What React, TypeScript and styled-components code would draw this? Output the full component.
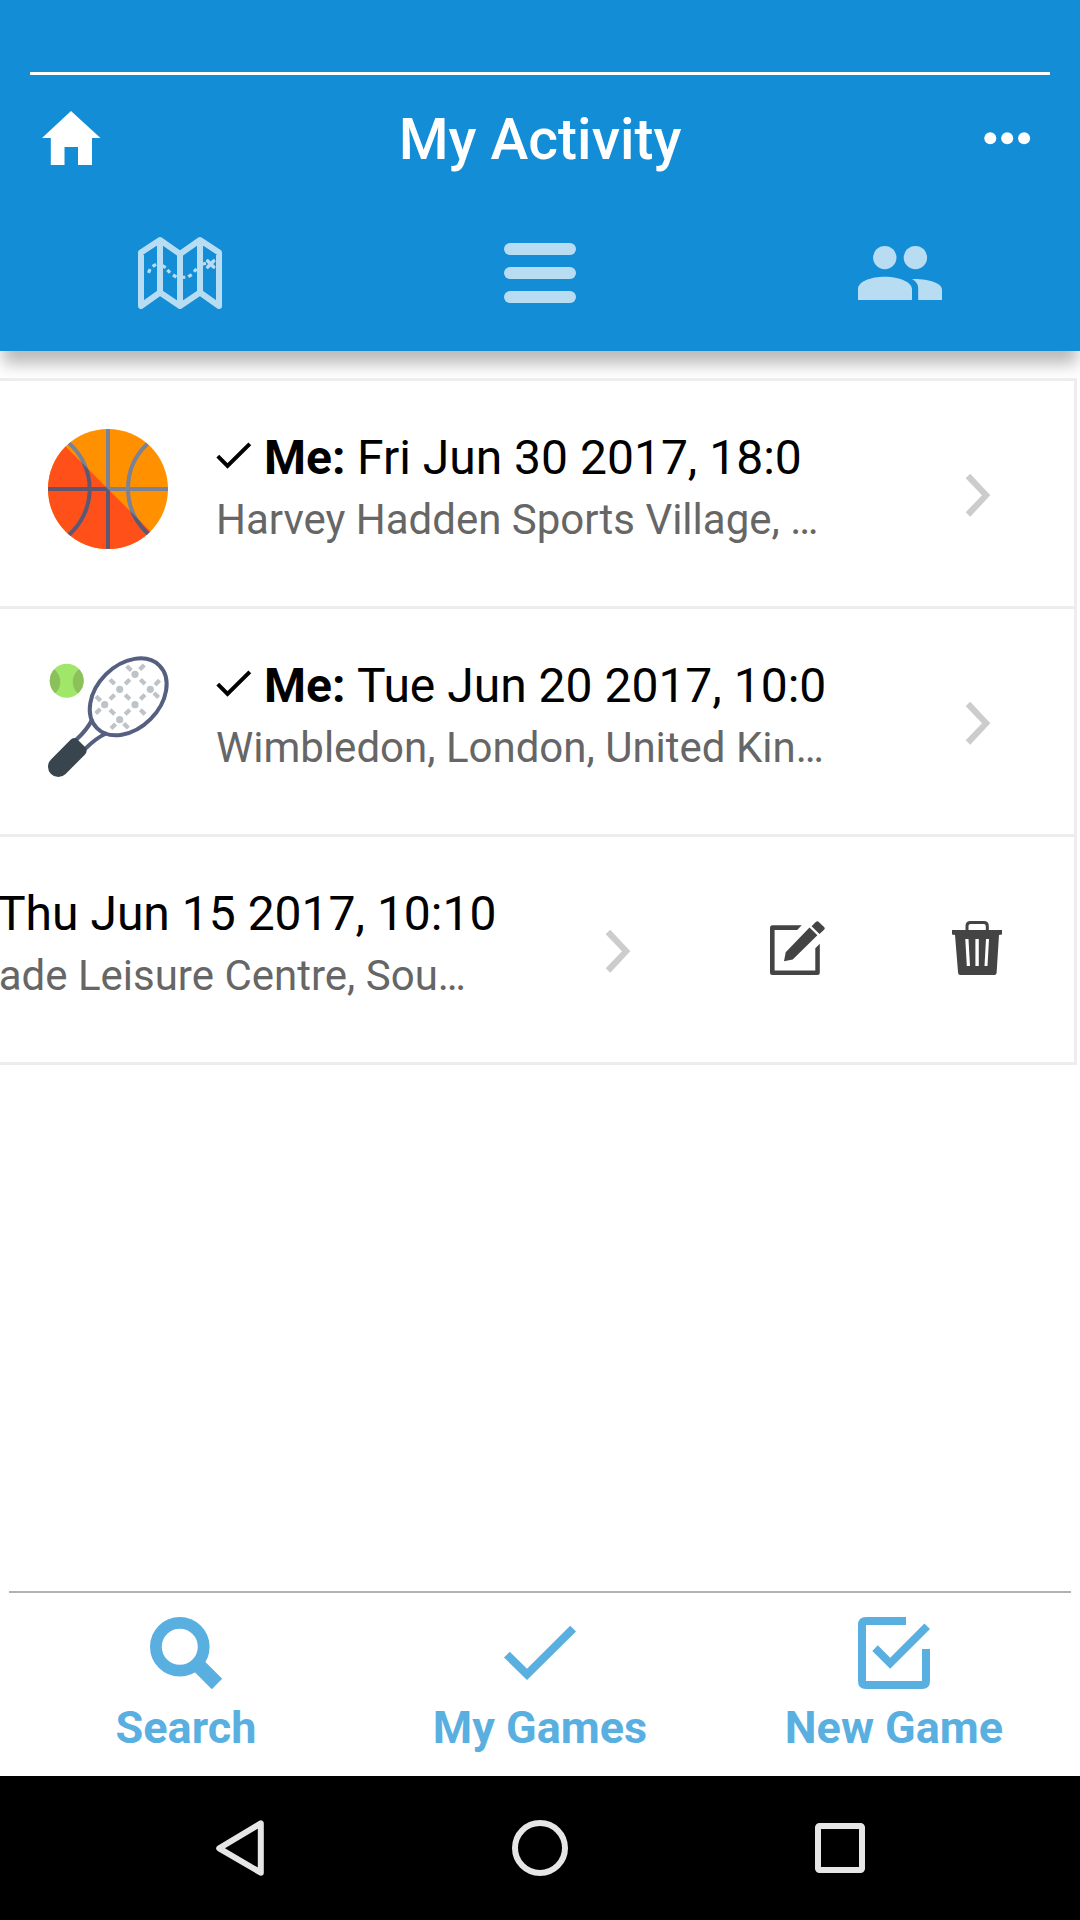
import React from "react";
import styled, { createGlobalStyle } from "styled-components";

const blue = "#138dd5";
const pale = "#b8ddf3";
const sky = "#5aafe1";
const line = "#ededed";

const GlobalStyle = createGlobalStyle`
  * { box-sizing: border-box; }
  body { margin: 0; background: #fff; overflow: hidden; }
`;

const Screen = styled.div`
  width: 1080px;
  height: 1920px;
  display: flex;
  flex-direction: column;
  overflow: hidden;
  background: #fff;
  font-family: Roboto, "Noto Sans", sans-serif;
`;

const Icon = styled.svg`
  display: block;
  flex: none;
  overflow: visible;
`;

const Header = styled.header`
  flex: none;
  height: 351px;
  display: flex;
  flex-direction: column;
  background: ${blue};
  box-shadow: 0 16px 15px -3px rgba(0, 0, 0, 0.27);
`;

const StatusSpace = styled.div`
  height: 75px;
  margin: 0 30px;
  border-bottom: 3px solid #fff;
`;

const TitleBar = styled.div`
  height: 126px;
  padding: 0 50px 0 42px;
  display: grid;
  grid-template-columns: 60px 1fr 46px;
  align-items: center;
  color: #fff;
`;

const Title = styled.h1`
  margin: 3px 0 0;
  padding-right: 6px;
  text-align: center;
  font-size: 57px;
  line-height: 66px;
  font-weight: 500;
`;

const Tabs = styled.nav`
  height: 144px;
  display: grid;
  grid-template-columns: repeat(3, 1fr);
  place-items: center;
`;

const BarStack = styled.div`
  display: flex;
  flex-direction: column;
  gap: 12px;
`;

const Bar = styled.span`
  width: 72px;
  height: 12px;
  border-radius: 6px;
  background: ${pale};
`;

const List = styled.main`
  flex: none;
  width: 1077px;
  margin-top: 27px;
  border-top: 3px solid ${line};
  border-right: 3px solid ${line};
  overflow: hidden;
`;

const Row = styled.section<{ $shift?: number }>`
  width: 1074px;
  height: 228px;
  display: flex;
  border-bottom: 3px solid ${line};
  ${(p) => p.$shift && `width: ${1074 + p.$shift}px; margin-left: -${p.$shift}px;`}
`;

const Avatar = styled.div`
  flex: none;
  width: 120px;
  height: 120px;
  margin: 48px 48px 0;
`;

const RowText = styled.div`
  width: 750px;
  padding-top: 49px;
  white-space: nowrap;
`;

const RowTitle = styled.div`
  height: 56px;
  display: flex;
  font-size: 48px;
  line-height: 56px;
  color: #000;
`;

const Mark = styled.span`
  width: 48px;
  padding-top: 12px;
`;

const Who = styled.b`
  margin-right: 11.5px;
  font-weight: 700;
`;

const Place = styled.div`
  margin-top: 9px;
  font-size: 42px;
  line-height: 50px;
  color: #666;
`;

const Chevron = styled.div`
  width: 24px;
  padding-top: 92.5px;
`;

const Actions = styled.div`
  display: flex;
  gap: 127px;
  padding: 84px 0 0 140px;
`;

const Footer = styled.footer`
  flex: none;
  height: 185px;
  margin: auto 9px 0;
  border-top: 2px solid #b2b2b2;
  display: grid;
  grid-template-columns: repeat(3, 1fr);
`;

const FooterItem = styled.div`
  display: flex;
  flex-direction: column;
  align-items: center;
  padding-top: 24px;
  color: ${sky};
  font-size: 45px;
  line-height: 52px;
  font-weight: 700;
`;

const FooterLabel = styled.span`
  margin-top: 13px;
`;

const SystemBar = styled.div`
  flex: none;
  height: 144px;
  padding: 0 210px;
  display: grid;
  grid-template-columns: 60px 60px 60px;
  justify-content: space-between;
  place-items: center;
  background: #000;
`;

function Basketball() {
  return (
    <Icon width="120" height="120" viewBox="0 0 120 120">
      <defs>
        <clipPath id="disc"><circle cx="60" cy="60" r="60" /></clipPath>
        <clipPath id="lower"><path d="M0 0L120 120H0Z" /></clipPath>
      </defs>
      <g clipPath="url(#disc)">
        <rect width="120" height="120" fill="#ff9100" />
        <path d="M0 0L120 120H0Z" fill="#ff5019" />
        {[["#7a8297", "disc"], ["#60566f", "lower"]].map(([stroke, clip]) => (
          <path
            key={clip}
            clipPath={`url(#${clip})`}
            fill="none"
            stroke={stroke}
            strokeWidth="4"
            d="M60 0V120M0 60H120M19 12.5L21.3 14.5A61 61 0 0 1 21.3 105.5L19 107.5M101.5 13L99.3 15A61 61 0 0 0 99.3 104L101.5 106"
          />
        ))}
      </g>
    </Icon>
  );
}

const knots = [[87, 17.3], [71.7, 32.3], [102.3, 32.3], [56.7, 47.7], [87, 47.7], [71.7, 62.7]];
const dashes: [number, number, number][] = [
  [64.3, 24.7, 1], [79.5, 24.8, -1], [94.7, 24.8, 1], [109.3, 25.6, -1], [81, 11.3, 1], [94, 10.3, -1],
  [94.7, 40, -1], [108.3, 38.3, 1], [79.5, 40, 1], [64.3, 40, -1], [50.3, 41.5, 1], [50, 54.3, -1],
  [64.3, 55, 1], [79.5, 55, -1], [94.7, 55, 1], [65.3, 69.3, -1], [78, 68.7, 1],
];

function Tennis() {
  return (
    <Icon width="120" height="120" viewBox="0 0 120 120">
      <defs><clipPath id="tball"><circle cx="18.7" cy="23.7" r="17" /></clipPath></defs>
      <g clipPath="url(#tball)">
        <rect width="40" height="45" fill="#a0e669" />
        <circle cx="-3.8" cy="24.7" r="16" fill="#8bc05a" />
        <circle cx="40.8" cy="24.7" r="16" fill="#8bc05a" />
      </g>
      {knots.map(([x, y]) => <circle key={`${x}-${y}`} cx={x} cy={y} r="3.6" fill="#bdc3c7" />)}
      {dashes.map(([x, y, s]) => (
        <path key={`${x}-${y}`} d={`M${x - 2.3} ${y - 2.3 * s}l4.6 ${4.6 * s}`} stroke="#bdc3c7" strokeWidth="4.2" />
      ))}
      <g fill="none" stroke="#556080" strokeWidth="4">
        <ellipse cx="80.2" cy="39.8" rx="44.2" ry="31.6" transform="rotate(-45 80.2 39.8)" />
        <path d="M44.5 62Q39 73 28 83M59 76Q48 81 37 92" />
      </g>
      <path d="M3 102.4L22.3 83Q26 79.5 29.5 82.5L37.5 90.5Q40 94 37 97.5L17.6 117A10.3 10.3 0 0 1 3 102.4Z" fill="#38454f" />
    </Icon>
  );
}

const trail: [number, number, number][] = [
  [11.3, 34, -65], [16.3, 28.3, -30], [26, 29.7, 30], [30.7, 34.3, 48], [36.7, 39, 30],
  [45.3, 40.3, 0], [52, 38.7, -30], [57.3, 33.3, -48], [66, 26.7, -15],
];

function TreasureMap() {
  return (
    <Icon width="84" height="72" viewBox="0 0 84 72" fill="none" stroke={pale}>
      <path d="M3 15.5L22 3L42 17L62 3L81 15.5V69L62 55.5L42 69L22 55.5L3 69ZM22 3V55M42 17V69M62 3V55" strokeWidth="6" strokeLinejoin="round" />
      {trail.map(([x, y, a]) => (
        <path key={x} d={`M${x - 2} ${y}h4`} transform={`rotate(${a} ${x} ${y})`} strokeWidth="3.2" />
      ))}
      <path d="M69.7 24L75.7 30M75.7 24L69.7 30" strokeWidth="3.6" strokeLinecap="round" />
    </Icon>
  );
}

type Game = { sport: React.ReactNode; when: string; place: string; open?: boolean };
const games: Game[] = [
  { sport: <Basketball />, when: "Fri Jun 30 2017, 18:0", place: "Harvey Hadden Sports Village, …" },
  { sport: <Tennis />, when: "Tue Jun 20 2017, 10:0", place: "Wimbledon, London, United Kin…" },
  { sport: null, when: "Thu Jun 15 2017, 10:10", place: "Southglade Leisure Centre, Sou…", open: true },
];

function GameRow({ sport, when, place, open }: Game) {
  return (
    <Row $shift={open ? 360 : 0}>
      <Avatar>{sport}</Avatar>
      <RowText>
        <RowTitle>
          <Mark>
            <Icon width="36" height="28" viewBox="0 0 36 28">
              <path d="M1.8 14.2L11.5 24L33.8 1.9" fill="none" stroke="#000" strokeWidth="4" />
            </Icon>
          </Mark>
          <Who>Me:</Who>
          {when}
        </RowTitle>
        <Place>{place}</Place>
      </RowText>
      <Chevron>
        <Icon width="24" height="43" viewBox="0 0 24 43">
          <path d="M0 4.2L4.2 0L24 21.2L4.2 42.5L0 38.3L16.3 21.2Z" fill="#ccc" stroke="#ccc" strokeWidth="0.6" />
        </Icon>
      </Chevron>
      {open && (
        <Actions>
          <Icon width="55" height="54" viewBox="0 0 55 54" fill="#444">
            <path d="M31.7 4.3H2.5Q0 4.3 0 6.8V51.5Q0 54 2.5 54H47.3Q49.8 54 49.8 51.5V22.7L45.3 27.2V49.5H4.6V9H27.2Z" />
            <path d="M14 40.3L15.7 31.2L39.5 6.5L47.4 14.3L22.7 38.4ZM41.6 5.3L46 .8Q47.3-.5 48.6.8L54.3 6.2Q55.3 7.3 54.3 8.5L49.5 13Z" />
          </Icon>
          <Icon width="50" height="54" viewBox="0 0 50 54" fill="#444">
            <path d="M0 9H50V13.5L47 14L44.6 52Q44.4 54 42.4 54H8.3Q6.3 54 6.1 52L3 14L0 13.5ZM13.3 18L14.8 45H18L16.5 18ZM23.4 18V45H26.8V18ZM34 18L32.5 45H35.5L37 18Z" fillRule="evenodd" />
            <path d="M15 10V5Q15 1.5 18.5 1.5H31.8Q35.3 1.5 35.3 5V10" fill="none" stroke="#444" strokeWidth="3" />
          </Icon>
        </Actions>
      )}
    </Row>
  );
}

export default function App() {
  return (
    <Screen>
      <GlobalStyle />
      <Header>
        <StatusSpace />
        <TitleBar>
          <Icon width="58" height="54" viewBox="0 0 58 54" fill="#fff">
            <path d="M29 0L58.5 27H50V54H36V36H22.5V54H8.8V27H0Z" />
          </Icon>
          <Title>My Activity</Title>
          <Icon width="46" height="12" viewBox="0 0 46 12" fill="#fff">
            <circle cx="6.3" cy="6.2" r="6" /><circle cx="23.2" cy="6.2" r="6" /><circle cx="40.1" cy="6.2" r="6" />
          </Icon>
        </TitleBar>
        <Tabs>
          <TreasureMap />
          <BarStack><Bar /><Bar /><Bar /></BarStack>
          <Icon width="84" height="54" viewBox="0 0 84 54" fill={pale}>
            <circle cx="26.8" cy="11.6" r="11.7" />
            <circle cx="57.4" cy="11.6" r="11.7" />
            <path d="M0 54V43C0 35.5 13 30.7 27 30.7S54 36 54 43V54ZM60.2 54V42C60 38 58.5 36 54 33C70 32.5 84 37 84 43.5V54Z" />
          </Icon>
        </Tabs>
      </Header>

      <List>
        {games.map((g) => <GameRow key={g.when} {...g} />)}
      </List>

      <Footer>
        <FooterItem>
          <Icon width="72" height="72" viewBox="0 0 72 72" fill="none" stroke={sky}>
            <circle cx="29.8" cy="29.8" r="23.9" strokeWidth="11.8" />
            <path d="M47 47L67 67" strokeWidth="14.6" />
          </Icon>
          <FooterLabel>Search</FooterLabel>
        </FooterItem>
        <FooterItem>
          <Icon width="72" height="72" viewBox="0 0 72 72" fill={sky}>
            <path d="M0 40.5L5.8 34.7L23 51.7L66.2 8.7L72 14.4L23 63Z" />
          </Icon>
          <FooterLabel>My Games</FooterLabel>
        </FooterItem>
        <FooterItem>
          <Icon width="72" height="72" viewBox="0 0 72 72" fill={sky}>
            <path d="M48 0H8Q0 0 0 8V64Q0 72 8 72H64Q72 72 72 64V32H64V64H8V8H48Z" />
            <path d="M14.3 34L19.8 28.3L32.2 40.7L66.4 6.4L72 12L32.2 51.8Z" />
          </Icon>
          <FooterLabel>New Game</FooterLabel>
        </FooterItem>
      </Footer>

      <SystemBar>
        <Icon width="48" height="56" viewBox="0 0 48 56" fill="none" stroke="#e6e6e6" strokeWidth="6">
          <path d="M44.8 3.3V52.7L3.2 28.3Z" strokeLinejoin="round" />
        </Icon>
        <Icon width="56" height="56" viewBox="0 0 56 56" fill="none" stroke="#e6e6e6" strokeWidth="6">
          <circle cx="28" cy="28" r="25" />
        </Icon>
        <Icon width="50" height="50" viewBox="0 0 50 50" fill="none" stroke="#e6e6e6" strokeWidth="6">
          <rect x="3" y="3" width="44" height="44" rx="1.5" />
        </Icon>
      </SystemBar>
    </Screen>
  );
}
